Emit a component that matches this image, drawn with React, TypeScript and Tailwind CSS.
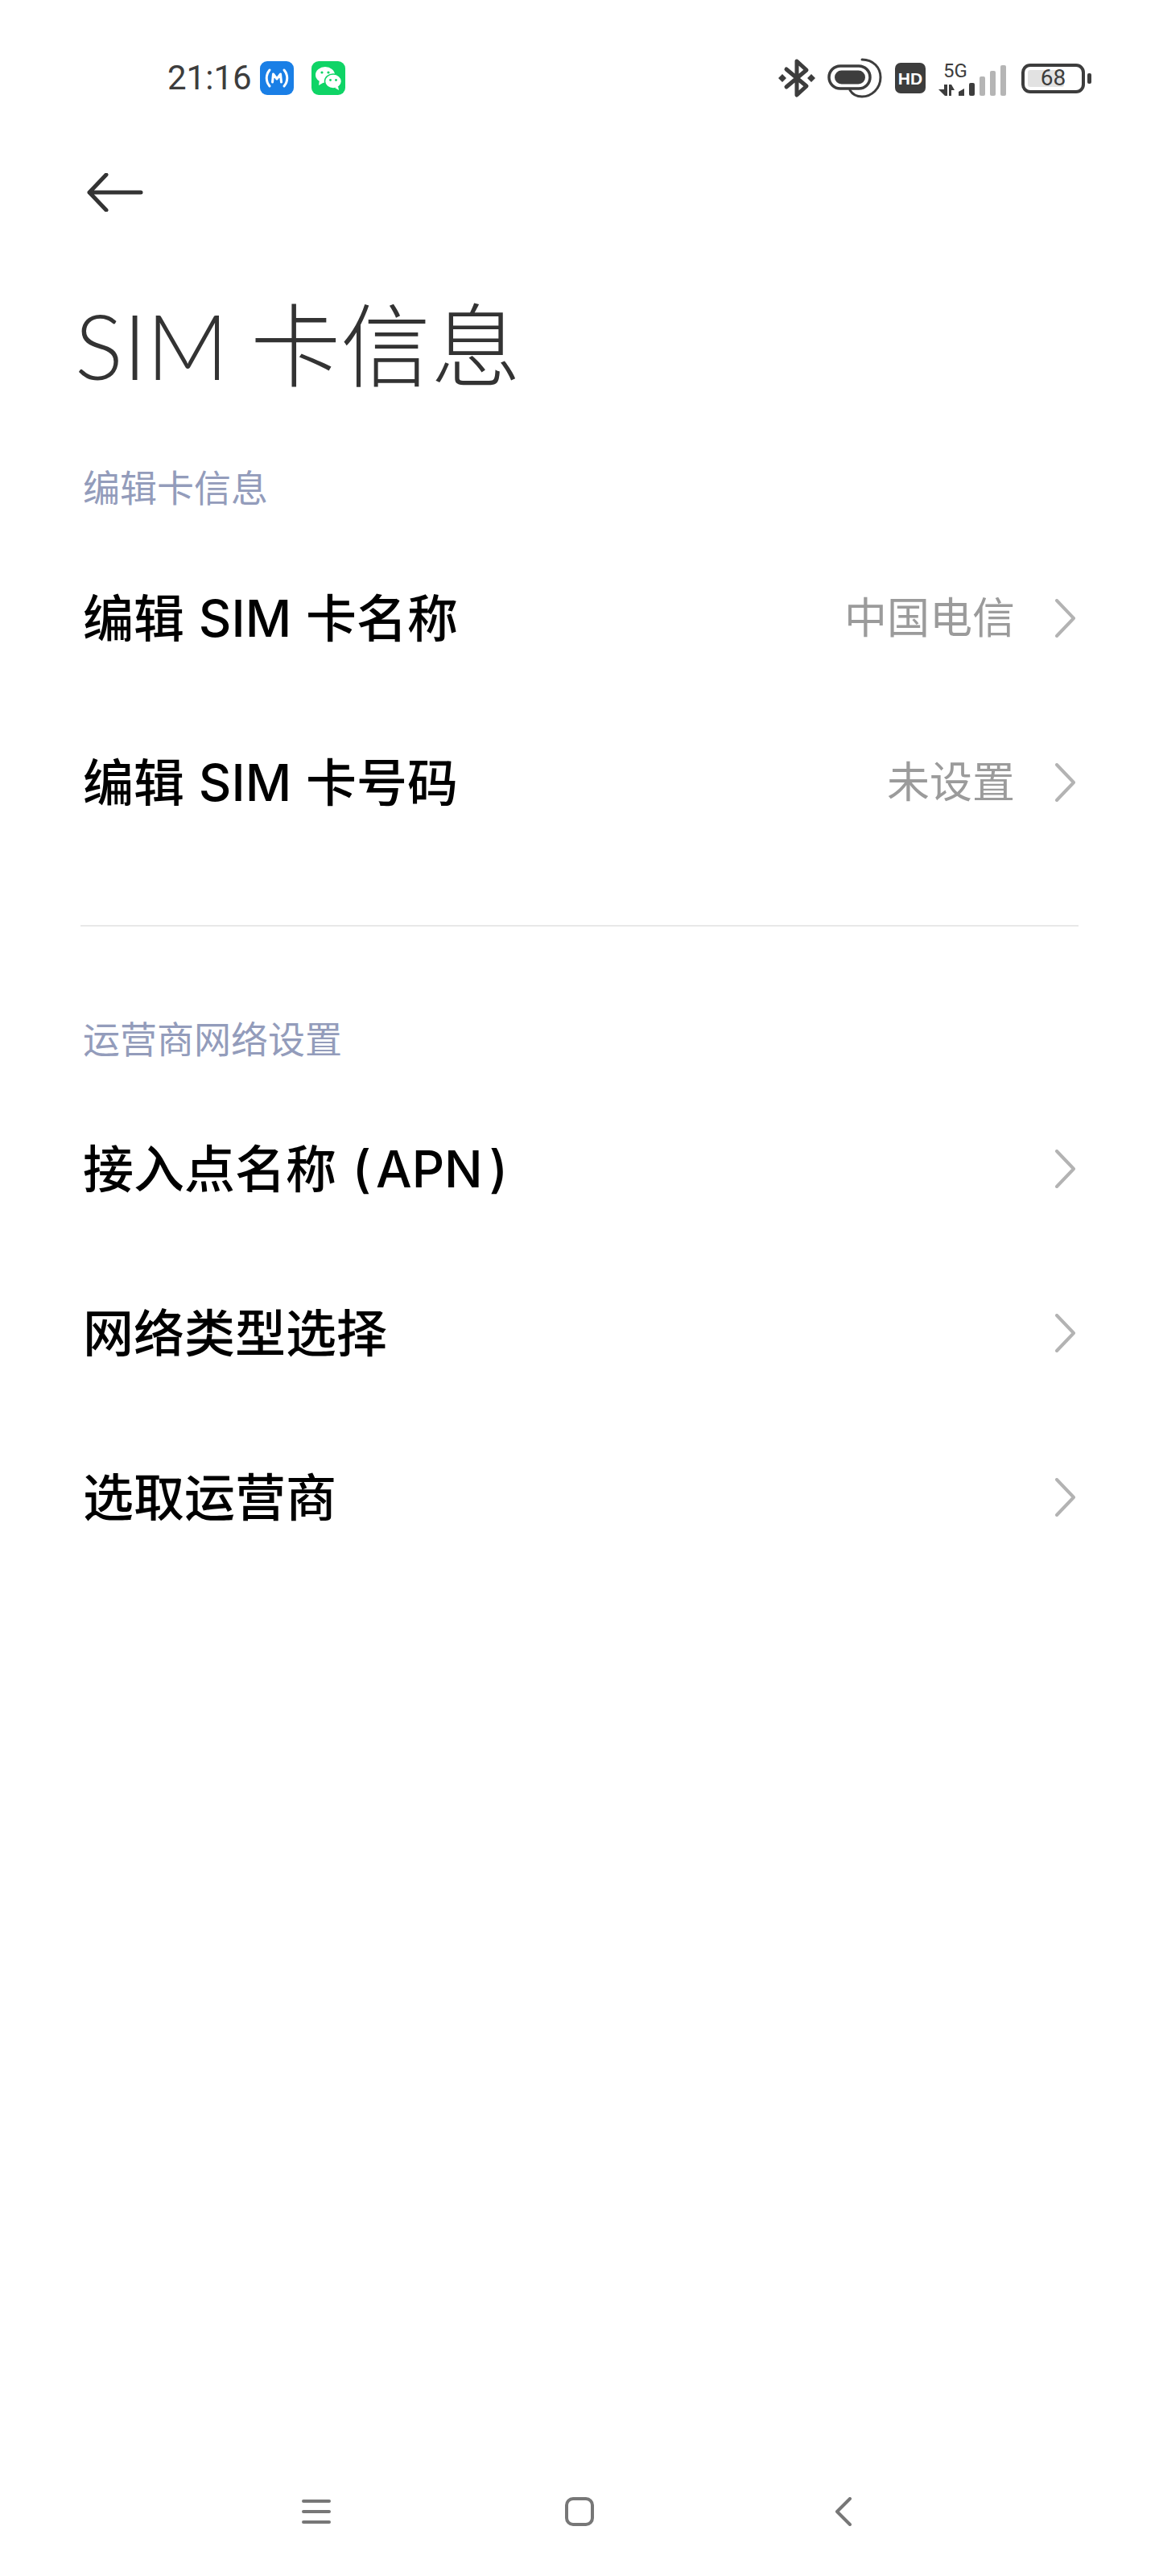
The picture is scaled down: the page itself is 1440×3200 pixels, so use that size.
const Chevron = () => (
  <svg width="26" height="48" viewBox="0 0 26 48" fill="none" className="ml-[50px] shrink-0">
    <path d="M2 2 L23 24 L2 46" stroke="#b3b3b3" strokeWidth="4" strokeLinecap="round" strokeLinejoin="round" />
  </svg>
);

const Row = ({ label, value }: { label: React.ReactNode; value?: string }) => (
  <div className="flex h-[204px] items-center pl-[103px] pr-[103px]">
    <div className="flex-1 text-[63px] font-medium text-black leading-none [word-spacing:1px]">{label}</div>
    {value && <div className="text-[53px] text-[#9b9b9b] leading-none">{value}</div>}
    <Chevron />
  </div>
);

const SectionLabel = ({ children }: { children: string }) => (
  <div className="pl-[103px] text-[46px] leading-[60px] text-[#939cbb]">{children}</div>
);

const StatusBar = () => (
  <div className="flex h-[120px] shrink-0 items-center pt-[74px] pl-[208px] pr-[84px]">
    <div className="w-[101px] text-[42px] leading-none text-[#3d3d3d] font-['Roboto',sans-serif]">21:16</div>
    <svg width="42" height="42" viewBox="0 0 42 42" className="ml-[14px]">
      <rect width="42" height="42" rx="9" fill="#1a7fe6" />
      <path d="M12 11 C7 17 7 25 12 31 M30 11 C35 17 35 25 30 31" stroke="#fff" strokeWidth="3" fill="none" strokeLinecap="round" />
      <path d="M15.500 26 L16.500 16 L21 22 L25.500 16 L26.500 26" stroke="#fff" strokeWidth="3" fill="none" strokeLinecap="round" strokeLinejoin="round" />
    </svg>
    <svg width="42" height="42" viewBox="0 0 42 42" className="ml-[22px]">
      <rect width="42" height="42" rx="9" fill="#0fd466" />
      <ellipse cx="17" cy="17" rx="12" ry="10" fill="#fff" />
      <path d="M10 23 L9 30 L16 26 Z" fill="#fff" />
      <ellipse cx="27" cy="25" rx="10.500" ry="9" fill="#fff" stroke="#0fd466" strokeWidth="1.500" />
      <path d="M33 31 L34 36 L29 33 Z" fill="#fff" />
      <circle cx="13" cy="14" r="1.600" fill="#0fd466" />
      <circle cx="21" cy="14" r="1.600" fill="#0fd466" />
      <circle cx="23.500" cy="23.500" r="1.400" fill="#0fd466" />
      <circle cx="30.500" cy="23.500" r="1.400" fill="#0fd466" />
    </svg>
    <div className="ml-auto flex items-center">
      {/* bluetooth */}
      <svg width="46" height="50" viewBox="0 0 46 50">
        <path d="M10 14 L35 35 L23 46 L23 4 L35 15 L10 36" stroke="#3d3d3d" strokeWidth="5" fill="none" strokeLinejoin="round" strokeLinecap="round" />
        <path d="M0 25 L5 20 L10 25 L5 30 Z M36 25 L41 20 L46 25 L41 30 Z" fill="#3d3d3d" />
      </svg>
      {/* pill */}
      <svg width="68" height="50" viewBox="0 0 68 50" className="ml-[15px]">
        <rect x="2" y="10" width="51" height="28" rx="14" fill="none" stroke="#3d3d3d" strokeWidth="3.500" />
        <rect x="9" y="15.500" width="38" height="17" rx="8.500" fill="#3d3d3d" />
        <path d="M43 2 C57 2 66 12 66 24 C66 38 55 48 43 48 C36 48 31 45 28 40" fill="none" stroke="#3d3d3d" strokeWidth="3" strokeLinecap="round" />
      </svg>
      {/* HD */}
      <div className="ml-[16px] flex h-[38px] w-[38px] items-center justify-center rounded-[7px] bg-[#3d3d3d] text-[21px] font-bold leading-none text-white font-['Liberation_Sans',sans-serif]">HD</div>
      {/* 5G + signal */}
      <svg width="88" height="54" viewBox="0 -8 88 54" className="ml-[14px] overflow-visible">
        <text x="8" y="18" fontSize="24" fill="#3d3d3d" fontFamily="Roboto, sans-serif">5G</text>
        <path d="M2 33 L9 33 L9 27 L13 27 L13 41 L10 41 Z M15 27 L18 27 L22 34 L18 34 L18 41 L15 41 Z" fill="#3d3d3d" />
        <path d="M27 36 L34 32 L34 41 L27 41 Z" fill="#3d3d3d" />
        <rect x="40" y="25" width="7" height="16" rx="2" fill="#3d3d3d" />
        <rect x="53" y="17" width="7" height="24" rx="2" fill="#b5b5b5" />
        <rect x="66" y="10" width="7" height="31" rx="2" fill="#b5b5b5" />
        <rect x="79" y="3" width="7" height="38" rx="2" fill="#b5b5b5" />
      </svg>
      {/* battery */}
      <div className="ml-[17px] relative flex h-[37px] w-[79px] items-center justify-center rounded-[11px] border-[4px] border-[#3d3d3d]">
        <div className="absolute left-[4px] top-[4px] bottom-[4px] w-[45px] rounded-[3px] bg-[#e2e2e2]" />
        <span className="relative text-[28px] leading-none text-[#3d3d3d] font-['Roboto',sans-serif]">68</span>
      </div>
      <div className="ml-[3px] h-[13px] w-[5px] rounded-[2px] bg-[#3d3d3d]" />
    </div>
  </div>
);

export default function App() {
  return (
    <div className="flex h-[3200px] w-[1440px] flex-col overflow-hidden bg-white font-['Inter','Noto_Sans_CJK_SC',sans-serif]">
      <StatusBar />
      <div className="pl-[108px] pt-[95px]">
        <svg width="70" height="48" viewBox="0 0 70 48" fill="none">
          <path d="M24 2 L3 24 L24 46 M3 24 L67 24" stroke="#333" strokeWidth="5" strokeLinecap="round" strokeLinejoin="round" />
        </svg>
      </div>
      <h1 className="pl-[93px] pt-[102px] text-[112px] font-light leading-[128px] text-[#333] font-['Lato','Noto_Sans_CJK_SC',sans-serif] [word-spacing:-3px]">
        SIM <span className="font-extralight">卡信息</span>
      </h1>
      <div className="pt-[83px]"><SectionLabel>编辑卡信息</SectionLabel></div>
      <div className="pt-[30px]">
        <Row label="编辑 SIM 卡名称" value="中国电信" />
        <Row label="编辑 SIM 卡号码" value="未设置" />
      </div>
      <div className="mx-[100px] mt-[75px] h-[2px] bg-[#e8e8e8]" />
      <div className="pt-[110px]"><SectionLabel>运营商网络设置</SectionLabel></div>
      <div className="pt-[29px]">
        <Row label={<>接入点名称 <span className="ml-[2px] mr-[6px]">(</span>APN<span className="ml-[8px]">)</span></>} />
        <Row label="网络类型选择" />
        <Row label="选取运营商" />
      </div>
      <div className="mt-auto flex h-[98px] items-start">
        <div className="flex w-full items-center pl-[375px]">
          <svg width="36" height="36" viewBox="0 0 36 36">
            <path d="M2 5 H34 M2 18 H34 M2 31 H34" stroke="#777" strokeWidth="4" strokeLinecap="round" />
          </svg>
          <svg width="36" height="36" viewBox="0 0 36 36" className="ml-[291px]">
            <rect x="2" y="2" width="32" height="32" rx="8" fill="none" stroke="#777" strokeWidth="4" />
          </svg>
          <svg width="24" height="36" viewBox="0 0 24 36" className="ml-[298px]">
            <path d="M20 2 L4 18 L20 34" fill="none" stroke="#777" strokeWidth="4" strokeLinecap="round" strokeLinejoin="round" />
          </svg>
        </div>
      </div>
    </div>
  );
}
